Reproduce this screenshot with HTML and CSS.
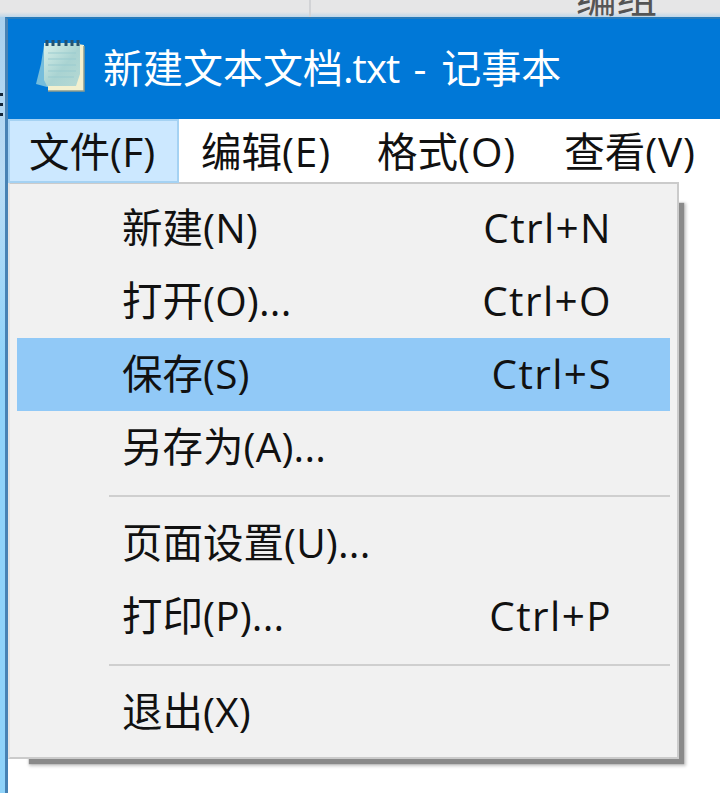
FILE: index.html
```html
<!DOCTYPE html>
<html lang="zh-CN">
<head>
<meta charset="utf-8">
<title>记事本</title>
<link rel="stylesheet" href="styles.css">
</head>
<body>
<div class="desktop">
  <div class="behind"><span class="behind-divider"></span><span class="behind-text">编组</span></div>
  <div class="behind-left"><i></i><i></i><i></i></div>
  <main class="window">
    <header class="titlebar">
      <svg class="icon" viewBox="0 0 52 56" width="52" height="56">
        <defs>
          <linearGradient id="paper" x1="0" y1="0" x2="1" y2="1"><stop offset="0" stop-color="#d9f1ea"/><stop offset=".55" stop-color="#a9d3d2"/><stop offset="1" stop-color="#b5d9d3"/></linearGradient>
        </defs>
        <path d="M8 7 5 26 0 46 11 49 42 46V8Z" fill="#75bddc"/>
        <path d="M42 6 48 7V53H12V48H38L42 38Z" fill="#f2f0cf"/>
        <path d="M48 8V53H12" fill="none" stroke="#8f9c8d" stroke-width="1.5"/>
        <path d="M8 5H44V36L40 48H11L8 42Z" fill="url(#paper)"/>
        <path d="M12 15H40M12 21H40M12 27H40M12 33H40M12 39H38" stroke="#9acbcf" stroke-width="1"/>
        <path d="M11 2V8M17 2V8M23 2V8M30 2V8M36 2V8M42 2V8" stroke="#26536f" stroke-width="3"/>
      </svg>
      <h1 class="title">新建文本文档<span class="ext">.txt</span><span class="dash">-</span>记事本</h1>
    </header>
    <nav class="menubar">
      <span class="tab active">文件<b>(F)</b></span>
      <span class="tab">编辑<b>(E)</b></span>
      <span class="tab">格式<b>(O)</b></span>
      <span class="tab">查看<b>(V)</b></span>
    </nav>
    <section class="menu">
      <div class="item"><span>新建<b>(N)</b></span><kbd>Ctrl+N</kbd></div>
      <div class="item"><span>打开<b>(O)...</b></span><kbd>Ctrl+O</kbd></div>
      <div class="item selected"><span>保存<b>(S)</b></span><kbd>Ctrl+S</kbd></div>
      <div class="item"><span>另存为<b>(A)...</b></span></div>
      <div class="separator"></div>
      <div class="item"><span>页面设置<b>(U)...</b></span></div>
      <div class="item"><span>打印<b>(P)...</b></span><kbd>Ctrl+P</kbd></div>
      <div class="separator"></div>
      <div class="item"><span>退出<b>(X)</b></span></div>
    </section>
  </main>
</div>
</body>
</html>
```
FILE: styles.css
```css
* { box-sizing: border-box; }
body { margin: 0; overflow: hidden; font-family: "Open Sans", "Noto Sans CJK SC", sans-serif; font-size: 40.5px; color: #111; }
b, kbd { font: inherit; }
.desktop { width: 720px; height: 793px; overflow: hidden; display: grid; grid-template: 17px 776px / 5px 715px; background: #8fd3fa; }
.behind { grid-column: 1 / 3; background: linear-gradient(#e6e6e7 70%, #bfd6e8); display: flex; overflow: hidden; }
.behind-divider { width: 2px; margin-left: 309px; background: #d2d3d6; }
.behind-text { margin-left: 265px; margin-top: -22px; height: 40px; line-height: 40px; color: #555; }
.behind-left { background: linear-gradient(#a9d0ed, #b9dcf5 160px, #8fd3fa 350px); display: flex; flex-direction: column; gap: 7px; padding-top: 76px; }
.behind-left i { width: 3px; height: 3px; background: #142638; }
.window { background: #fff; border-left: 3px solid #4782b4; border-top: 2px solid #277bbb; }
.titlebar { height: 100px; background: #0078d7; display: flex; align-items: center; padding-left: 28px; }
.icon { flex: none; margin-top: -7px; }
.title { margin: -2px 0 0 15px; font-size: 40px; line-height: 60px; font-weight: 400; color: #fff; white-space: nowrap; }
.ext { letter-spacing: -.9px; }
.dash { margin: 0 15px 0 14px; }
.menubar { height: 64px; display: flex; background: #fff; }
.tab { flex: none; line-height: 66px; height: 64px; padding: 0 24px 0 22px; white-space: nowrap; }
.tab b { letter-spacing: .9px; }
.tab + .tab + .tab { padding-right: 26px; }
.tab.active { width: 171px; background: #cce8ff; border: 2px solid #a5d2f3; line-height: 62px; padding: 0 19px; }
.tab.active b { letter-spacing: .2px; }
.menu { width: 671px; height: 577px; margin-top: -1px; background: #f1f1f1; border: 2px solid #cbcbcb; border-left-color: #e5e5e5; padding: 8px 7px 0; box-shadow: 13px 13px 1px -8px #8a8a8a, 14px 14px 3px -7px #c4c4c4; }
.item { height: 73px; display: flex; align-items: center; justify-content: space-between; padding: 0 58px 2px 105px; line-height: 60px; }
.item.selected { background: #91c9f7; }
.item b { letter-spacing: .2px; }
.item kbd { letter-spacing: 1.4px; }
.separator { height: 23px; margin-left: 92px; background: linear-gradient(#cfcfcf, #cfcfcf) 0 11px / 100% 2px no-repeat; }
```
